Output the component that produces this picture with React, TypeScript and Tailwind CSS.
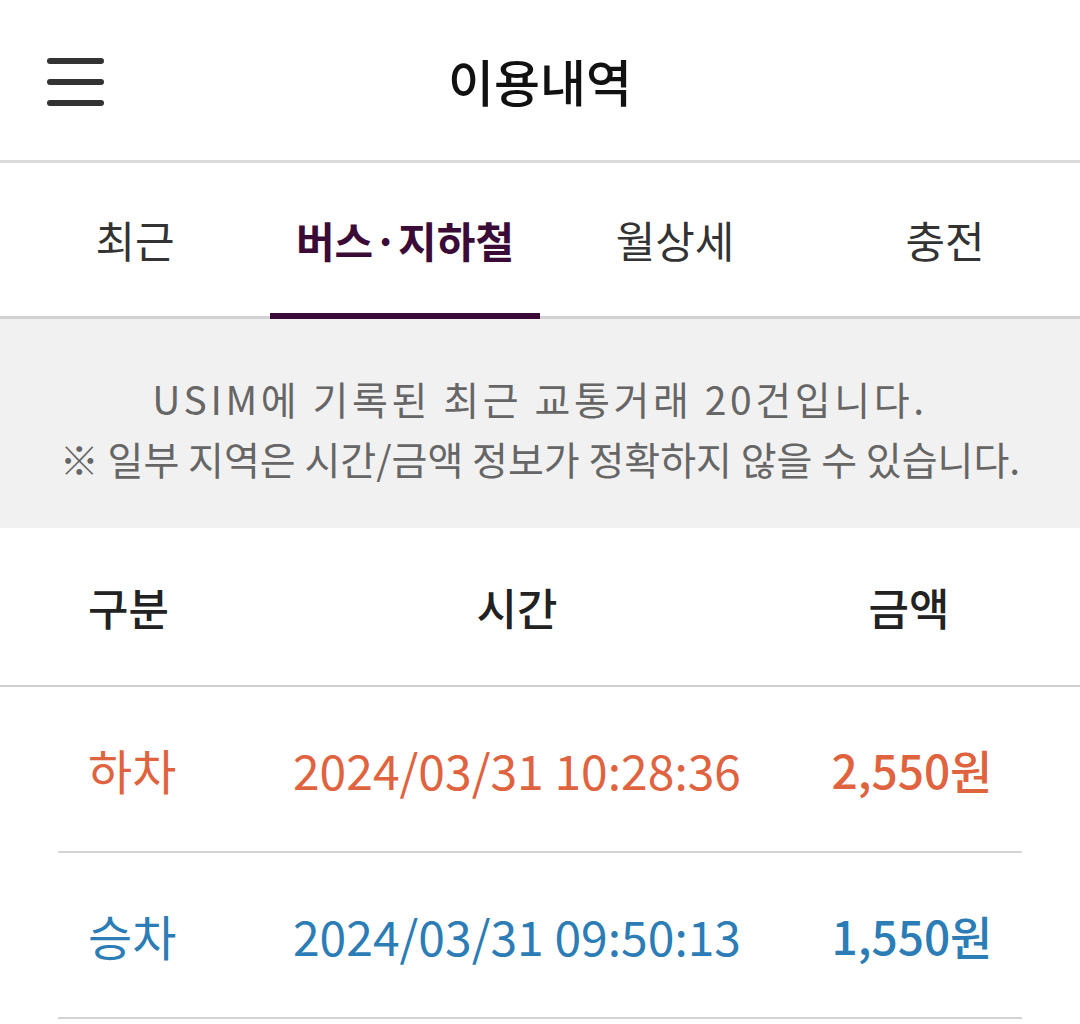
import React from "react";

const tabs = ["최근", "버스·지하철", "월상세", "충전"];

type Row = { kind: string; time: string; amount: string; color: string };

const rows: Row[] = [
  { kind: "하차", time: "2024/03/31 10:28:36", amount: "2,550원", color: "text-[#e0633f]" },
  { kind: "승차", time: "2024/03/31 09:50:13", amount: "1,550원", color: "text-[#2c7db6]" },
];

function MenuIcon() {
  return (
    <div className="flex flex-col gap-[15px]">
      <span className="block w-[57px] h-[6px] rounded-full bg-[#333]" />
      <span className="block w-[57px] h-[6px] rounded-full bg-[#333]" />
      <span className="block w-[57px] h-[6px] rounded-full bg-[#333]" />
    </div>
  );
}

export default function App() {
  return (
    <div className="w-[1080px] h-[1024px] overflow-hidden bg-white font-['Noto_Sans_CJK_KR','Noto_Sans',sans-serif]">
      {/* top bar */}
      <header className="relative h-[160px] flex items-center justify-center border-b-[3px] border-[#dcdcdc] box-content">
        <div className="absolute left-[47px] top-[58px]">
          <MenuIcon />
        </div>
        <h1 className="text-[50px] font-medium text-[#111] leading-none">이용내역</h1>
      </header>

      {/* tabs */}
      <nav className="grid grid-cols-4 h-[153px] border-b-[3px] border-[#d2d2d2] box-content">
        {tabs.map((t, i) => {
          const active = i === 1;
          return (
            <div key={t} className="relative flex items-center justify-center">
              <span
                className={
                  active
                    ? "text-[42px] font-bold text-[#3b0b37] leading-none"
                    : "text-[43px] text-[#333] leading-none"
                }
              >
                {t}
              </span>
              {active && (
                <span className="absolute left-0 right-0 bottom-[-3px] h-[6px] bg-[#3b0b37]" />
              )}
            </div>
          );
        })}
      </nav>

      {/* notice */}
      <section className="h-[209px] bg-[#f2f1f1] flex flex-col items-center justify-center pt-[8px] text-[#666] text-[39px] leading-[60px]">
        <p className="tracking-[3.6px]">USIM에 기록된 최근 교통거래 20건입니다.</p>
        <p>※ 일부 지역은 시간/금액 정보가 정확하지 않을 수 있습니다.</p>
      </section>

      {/* table head */}
      <div className="grid grid-cols-[290px_454px_336px] h-[157px] items-center border-b-[2px] border-[#cfcfcf] box-content text-[44px] font-medium text-[#222] leading-none">
        <span className="pl-[88px]">구분</span>
        <span className="text-center">시간</span>
        <span className="text-center pr-[6px]">금액</span>
      </div>

      {/* records */}
      {rows.map((r) => (
        <div key={r.time}>
          <div className={`grid grid-cols-[290px_454px_336px] h-[164px] items-center text-[48px] leading-none ${r.color}`}>
            <span className="pl-[88px]">{r.kind}</span>
            <span className="text-center">{r.time}</span>
            <span className="text-center font-medium text-[46px]">{r.amount}</span>
          </div>
          <div className="mx-[58px] h-[2px] bg-[#d4d4d4]" />
        </div>
      ))}
    </div>
  );
}
